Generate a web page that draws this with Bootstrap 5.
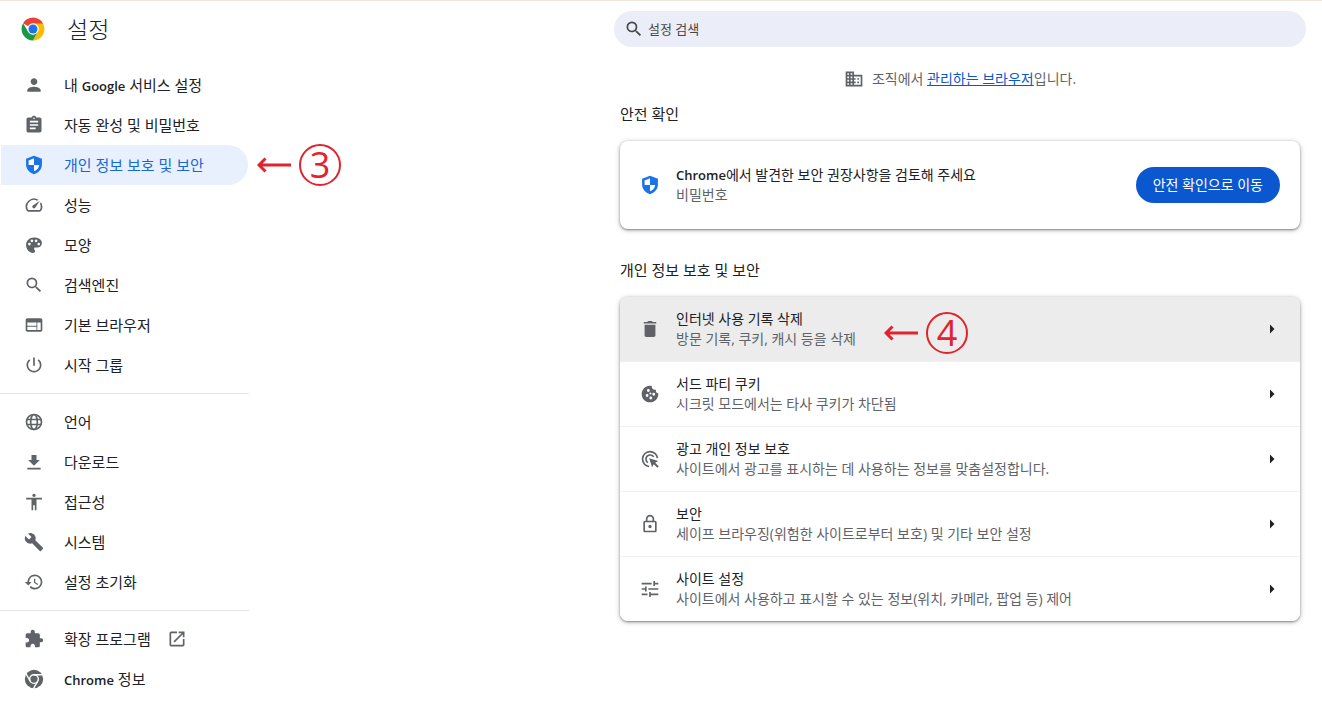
<!DOCTYPE html>
<html lang="ko">
<head>
<meta charset="utf-8">
<meta name="viewport" content="width=device-width, initial-scale=1">
<title>설정</title>
<link href="https://cdn.jsdelivr.net/npm/bootstrap@5.3.0/dist/css/bootstrap.min.css" rel="stylesheet">
<style>
  body { font-family: "Open Sans", "Noto Sans CJK KR", sans-serif; font-size: 14px; line-height: 20px; color: #202124; border-top: 1px solid #f0e4dc; background: #fff; }
  svg { display: block; fill: currentColor; flex: none; }
  .ic { width: 20px; height: 20px; color: #5f6368; }
  .ic-blue { color: #1a73e8; }
  .ic-dark { color: #474747; }
  .topbar { height: 56px; }
  .brand { font-size: 23px; gap: 22px; padding-left: 21px; font-weight: 300; line-height: 32px; }
  .column { width: 100%; max-width: 692px; }
  .content { padding: 0 6px; }
  .search { height: 36px; background: #ebedf8; color: #474747; gap: 4px; padding-left: 10px; }
  .search input { font-size: 13px; color: #474747; outline: 0; }
  .search input::placeholder { color: #474747; opacity: 1; }
  .sidebar { width: 249px; padding-top: 8px; }
  .side-item { height: 40px; width: 247px; margin-left: 1px; padding: 0 0 0 23px; gap: 20px; font-size: 15px; font-weight: 400; color: #202124; border-radius: 0 20px 20px 0; white-space: nowrap; }
  .side-item:hover { color: #202124; background: #f5f6f8; }
  .side-item.active { color: #1967d2; background: #e8f0fe; }
  .rule { height: 1px; margin: 8px 0; background: #e3e4e6; }
  .managed { color: #5f6368; gap: 8px; padding: 12px 0 13px; }
  .managed a { color: #0b57d0; }
  .section-title { font-size: 15px; line-height: 24px; font-weight: 400; margin: 0 0 15px; }
  .panel + .section-title { margin-top: 29px; }
  .panel { border: 0; border-radius: 8px; box-shadow: 0 1px 2px rgba(60,64,67,.5), 0 1px 4px 1px rgba(60,64,67,.25); }
  .panel-row { gap: 16px; padding: 12px 20px; border: 0; color: #202124; }
  .panel .panel-row + .panel-row { border-top: 1px solid #f0f0f0; }
  .panel-row.hovered { background: #ececec; }
  .safety { padding: 24px 20px; }
  .latin { font-size: 13px; font-weight: 600; }
  .sub { color: #5f6368; }
  .btn-check-safety { height: 36px; padding: 0 16px; border-radius: 18px; background: #0b57d0; color: #fff; font-size: 14px; line-height: 20px; }
  .btn-check-safety:hover { background: #0a4dbb; color: #fff; }
  .chev { width: 16px; height: 16px; color: #202124; }
  .callout-mark { position: absolute; gap: 8px; color: #e0232d; top: 50%; transform: translateY(-50%); pointer-events: none; }
  .callout-nav { left: 257px; }
  .callout-row { left: 264px; margin-top: 4px; }
  .ring { width: 42px; height: 42px; border: 2px solid; border-radius: 50%; font-size: 36px; line-height: 36px; font-weight: 500; }
</style>
</head>
<body>
<svg width="0" height="0" class="position-absolute" aria-hidden="true">
  <symbol id="i-person" viewBox="0 0 24 24"><path d="M12 12c2.21 0 4-1.79 4-4s-1.79-4-4-4-4 1.79-4 4 1.79 4 4 4zm0 2c-2.67 0-8 1.34-8 4v2h16v-2c0-2.66-5.33-4-8-4z"/></symbol>
  <symbol id="i-clip" viewBox="0 0 24 24"><path d="M19 3h-4.18C14.4 1.84 13.3 1 12 1c-1.3 0-2.4.84-2.82 2H5c-1.1 0-2 .9-2 2v14c0 1.1.9 2 2 2h14c1.1 0 2-.9 2-2V5c0-1.1-.9-2-2-2zm-7 0c.55 0 1 .45 1 1s-.45 1-1 1-1-.45-1-1 .45-1 1-1zm2 14H7v-2h7v2zm3-4H7v-2h10v2zm0-4H7V7h10v2z"/></symbol>
  <symbol id="i-shield" viewBox="0 0 24 24"><path d="M12 1 2.500 4.600v6.800c0 5.300 4 10.200 9.500 11.600 5.500-1.400 9.500-6.300 9.500-11.600V4.600z"/><path fill="#fff" d="M12 4v8H5.500V6.500zM12 12h6.300c-.5 3.600-2.900 6.400-6.300 7.500z"/></symbol>
  <symbol id="i-speed" viewBox="0 0 24 24"><path d="m20.380 8.570-1.230 1.850a8 8 0 0 1-.22 7.580H5.070A8 8 0 0 1 15.580 6.850l1.850-1.230A10 10 0 0 0 3.350 19a2 2 0 0 0 1.720 1h13.850a2 2 0 0 0 1.740-1 10 10 0 0 0-.27-10.440zm-9.790 6.840a2 2 0 0 0 2.830 0l5.660-8.490-8.490 5.660a2 2 0 0 0 0 2.830z"/></symbol>
  <symbol id="i-palette" viewBox="0 0 24 24"><path d="M12 3C6.500 3 2.500 7 2.500 12s3.500 9.500 8.500 9.500c1.400 0 2.300-.9 2.300-2.200 0-.7-.3-1.200-.7-1.700-.4-.4-.5-.8-.5-1.200 0-.9.7-1.500 1.600-1.500H16c3.200 0 5.500-2.400 5.500-5.400C21.500 5.600 17.300 3 12 3zM6.500 12.500a1.600 1.600 0 1 1 0-3.200 1.600 1.600 0 0 1 0 3.200zM9.500 8.600a1.600 1.600 0 1 1 0-3.200 1.600 1.600 0 0 1 0 3.200zm5 0a1.600 1.600 0 1 1 0-3.200 1.600 1.600 0 0 1 0 3.200zm3.200 3.900a1.600 1.600 0 1 1 0-3.200 1.600 1.600 0 0 1 0 3.200z"/></symbol>
  <symbol id="i-search" viewBox="0 0 24 24"><path d="M15.500 14h-.79l-.28-.27A6.470 6.470 0 0 0 16 9.500 6.500 6.500 0 1 0 9.500 16c1.610 0 3.090-.59 4.230-1.570l.27.28v.79l5 4.990L20.490 19l-4.990-5zm-6 0C7.010 14 5 11.990 5 9.500S7.010 5 9.500 5 14 7.010 14 9.500 11.990 14 9.500 14z"/></symbol>
  <symbol id="i-web" viewBox="0 0 24 24"><path d="M20 4H4c-1.100 0-1.990.9-1.990 2L2 18c0 1.100.9 2 2 2h16c1.100 0 2-.9 2-2V6c0-1.100-.9-2-2-2zm-5 14H4v-4h11v4zm0-5H4V9h11v4zm5 5h-4V9h4v9z"/></symbol>
  <symbol id="i-power" viewBox="0 0 24 24"><path d="M13 3h-2v10h2V3zm4.830 2.170-1.420 1.420A6.920 6.920 0 0 1 19 12a7 7 0 1 1-11.420-5.420L6.170 5.170A9 9 0 1 0 21 12a8.930 8.930 0 0 0-3.170-6.830z"/></symbol>
  <symbol id="i-globe" viewBox="0 0 24 24"><g fill="none" stroke="currentColor" stroke-width="2"><circle cx="12" cy="12" r="9"/><ellipse cx="12" cy="12" rx="4" ry="9"/><path d="M3.500 9h17M3.500 15h17"/></g></symbol>
  <symbol id="i-down" viewBox="0 0 24 24"><path d="M19 9.500h-4V3.500H9v6H5l7 7zM4 19v2h16v-2z"/></symbol>
  <symbol id="i-access" viewBox="0 0 24 24"><path d="M12 2c1.100 0 2 .9 2 2s-.9 2-2 2-2-.9-2-2 .9-2 2-2zm9.500 7H15v13h-2v-6h-2v6H9V9H2.500V7h19v2z"/></symbol>
  <symbol id="i-wrench" viewBox="0 0 24 24"><path d="m22.700 19-9.100-9.100c.9-2.300.4-5-1.500-6.900-2-2-5-2.400-7.400-1.300L9 6 6 9 1.600 4.700C.4 7.100.9 10.100 2.900 12.100c1.900 1.900 4.600 2.400 6.900 1.500l9.100 9.100c.4.4 1 .4 1.400 0l2.300-2.300c.5-.4.5-1.100.1-1.400z"/></symbol>
  <symbol id="i-history" viewBox="0 0 24 24"><path d="M13 3a9 9 0 0 0-9 9H1l3.890 3.890.7.140L9 12H6a7 7 0 1 1 2.060 4.940l-1.420 1.420A9 9 0 1 0 13 3zm-1 5v5l4.280 2.540.72-1.210-3.500-2.080V8H12z"/></symbol>
  <symbol id="i-ext" viewBox="0 0 24 24"><path d="M20.500 11H19V7c0-1.100-.9-2-2-2h-4V3.500a2.500 2.500 0 0 0-5 0V5H4c-1.100 0-1.990.9-1.990 2v3.800H3.500c1.490 0 2.700 1.210 2.700 2.700s-1.210 2.700-2.700 2.700H2V20c0 1.100.9 2 2 2h3.800v-1.500c0-1.490 1.210-2.700 2.700-2.700s2.700 1.210 2.700 2.700V22H17c1.100 0 2-.9 2-2v-4h1.500a2.500 2.500 0 0 0 0-5z"/></symbol>
  <symbol id="i-open" viewBox="0 0 24 24"><path d="M19 19H5V5h7V3H5a2 2 0 0 0-2 2v14a2 2 0 0 0 2 2h14c1.100 0 2-.9 2-2v-7h-2v7zM14 3v2h3.590l-9.830 9.830 1.410 1.410L19 6.410V10h2V3h-7z"/></symbol>
  <symbol id="i-chrome" viewBox="0 0 24 24"><circle cx="12" cy="12" r="11"/><g fill="none" stroke="#fff" stroke-width="1.700"><circle cx="12" cy="12" r="5.200"/><path d="M12 6.800h11M7.500 14.600 2 5.100M16.500 14.600 11 24"/></g></symbol>
  <symbol id="i-building" viewBox="0 0 24 24"><path d="M12 7V3H2v18h20V7H12zM6 19H4v-2h2v2zm0-4H4v-2h2v2zm0-4H4V9h2v2zm0-4H4V5h2v2zm4 12H8v-2h2v2zm0-4H8v-2h2v2zm0-4H8V9h2v2zm0-4H8V5h2v2zm10 12h-8v-2h2v-2h-2v-2h2v-2h-2V9h8v10zm-2-8h-2v2h2v-2zm0 4h-2v2h2v-2z"/></symbol>
  <symbol id="i-trash" viewBox="0 0 24 24"><path d="M5.500 7v12.500c0 1.100.9 2 2 2h9c1.100 0 2-.9 2-2V7zM19.500 3.500h-4L14 2.500h-4l-1.500 1h-4v2h15z"/></symbol>
  <symbol id="i-cookie" viewBox="0 0 24 24"><path d="M21.950 10.990c-1.790-.03-3.700-1.950-2.680-4.220-2.970 1-5.780-1.590-5.190-4.560C7.110.74 2 6.410 2 12c0 5.520 4.480 10 10 10 5.890 0 10.540-5.080 9.950-11.010zM8.500 15.500a1.700 1.700 0 1 1 0-3.400 1.700 1.700 0 0 1 0 3.400zm1.500-6a1.700 1.700 0 1 1 0-3.400 1.700 1.700 0 0 1 0 3.400zm3 9a1.700 1.700 0 1 1 0-3.400 1.700 1.700 0 0 1 0 3.400zm3.500-4.500a1.700 1.700 0 1 1 0-3.400 1.700 1.700 0 0 1 0 3.400zM12.500 12.500a1.200 1.200 0 1 1 0-2.400 1.200 1.200 0 0 1 0 2.400z"/></symbol>
  <symbol id="i-ads" viewBox="0 0 24 24"><g fill="none" stroke="currentColor" stroke-width="2"><path d="M11 21A9 9 0 1 1 21 11"/><path d="M9.500 16.400A5 5 0 1 1 16.400 9.500"/></g><path d="m11 11 11 3.500-3.800 2 4.300 4.300-1.700 1.700-4.300-4.300-2 3.800z"/></symbol>
  <symbol id="i-lock" viewBox="0 0 24 24"><path d="M18 8h-1V6A5 5 0 0 0 7 6v2H6c-1.100 0-2 .9-2 2v10c0 1.100.9 2 2 2h12c1.100 0 2-.9 2-2V10c0-1.100-.9-2-2-2zM9 6a3 3 0 0 1 6 0v2H9V6zm9 14H6V10h12v10zm-6-3a2 2 0 1 0 0-4 2 2 0 0 0 0 4z"/></symbol>
  <symbol id="i-tune" viewBox="0 0 24 24"><path d="M2 4.500h12v2H2zM18 4.500h4v2h-4zM16 2.500h2v6h-2zM2 11h4v2H2zM10 11h12v2H10zM6 9h2v6H6zM2 17.500h7v2H2zM13 17.500h9v2h-9zM11 15.500h2v6h-2z"/></symbol>
  <symbol id="i-chev" viewBox="0 0 16 16"><path d="M6 3.500 10.500 8 6 12.500z"/></symbol>
  <symbol id="i-arrow" viewBox="0 0 34 16"><path d="M8.500 1.500 2 8l6.500 6.500M2 8h32" fill="none" stroke="currentColor" stroke-width="3"/></symbol>
</svg>

<header class="topbar d-flex align-items-center">
  <div class="brand d-flex align-items-center">
    <svg width="24" height="24" viewBox="0 0 48 48" role="img" aria-label="Chrome">
      <path fill="#ea4335" d="M24 24 4.100 12.500A23 23 0 0 1 43.900 12.500L44 14H24z"/>
      <path fill="#fbbc04" d="M24 13h20.200A23 23 0 0 1 24 47l9.500-17.500z"/>
      <path fill="#1e9648" d="M4.100 12.500 14.500 29.500 24 35l9.500-5.500L24 47A23 23 0 0 1 4.100 12.500z"/>
      <circle cx="24" cy="24" r="11.500" fill="#fff"/><circle cx="24" cy="24" r="9" fill="#1a73e8"/>
    </svg>
    <span>설정</span>
  </div>
  <div class="column ms-auto me-3">
    <label class="search d-flex align-items-center rounded-pill">
      <svg class="ic ic-dark"><use href="#i-search"/></svg>
      <input type="search" class="border-0 bg-transparent flex-grow-1 p-0" placeholder="설정 검색" aria-label="설정 검색">
    </label>
  </div>
</header>

<div class="d-flex align-items-start">
  <nav class="sidebar nav flex-column flex-nowrap flex-shrink-0">
    <a class="side-item nav-link d-flex align-items-center" href="#"><svg class="ic"><use href="#i-person"/></svg><span>내 <span class="latin">Google</span> 서비스 설정</span></a>
    <a class="side-item nav-link d-flex align-items-center" href="#"><svg class="ic"><use href="#i-clip"/></svg>자동 완성 및 비밀번호</a>
    <div class="position-relative">
      <a class="side-item nav-link d-flex align-items-center active" aria-current="page" href="#"><svg class="ic ic-blue"><use href="#i-shield"/></svg>개인 정보 보호 및 보안</a>
      <div class="callout-mark callout-nav d-flex align-items-center"><svg width="34" height="16"><use href="#i-arrow"/></svg><span class="ring d-flex align-items-center justify-content-center">3</span></div>
    </div>
    <a class="side-item nav-link d-flex align-items-center" href="#"><svg class="ic"><use href="#i-speed"/></svg>성능</a>
    <a class="side-item nav-link d-flex align-items-center" href="#"><svg class="ic"><use href="#i-palette"/></svg>모양</a>
    <a class="side-item nav-link d-flex align-items-center" href="#"><svg class="ic"><use href="#i-search"/></svg>검색엔진</a>
    <a class="side-item nav-link d-flex align-items-center" href="#"><svg class="ic"><use href="#i-web"/></svg>기본 브라우저</a>
    <a class="side-item nav-link d-flex align-items-center" href="#"><svg class="ic"><use href="#i-power"/></svg>시작 그룹</a>
    <div class="rule"></div>
    <a class="side-item nav-link d-flex align-items-center" href="#"><svg class="ic"><use href="#i-globe"/></svg>언어</a>
    <a class="side-item nav-link d-flex align-items-center" href="#"><svg class="ic"><use href="#i-down"/></svg>다운로드</a>
    <a class="side-item nav-link d-flex align-items-center" href="#"><svg class="ic"><use href="#i-access"/></svg>접근성</a>
    <a class="side-item nav-link d-flex align-items-center" href="#"><svg class="ic"><use href="#i-wrench"/></svg>시스템</a>
    <a class="side-item nav-link d-flex align-items-center" href="#"><svg class="ic"><use href="#i-history"/></svg>설정 초기화</a>
    <div class="rule"></div>
    <a class="side-item nav-link d-flex align-items-center" href="#"><svg class="ic"><use href="#i-ext"/></svg><span class="d-flex align-items-center gap-3">확장 프로그램<svg class="ic"><use href="#i-open"/></svg></span></a>
    <a class="side-item nav-link d-flex align-items-center" href="#"><svg class="ic"><use href="#i-chrome"/></svg><span><span class="latin">Chrome</span> 정보</span></a>
  </nav>

  <main class="column content ms-auto me-3">
    <div class="managed d-flex align-items-center justify-content-center">
      <svg class="ic"><use href="#i-building"/></svg>
      <span>조직에서 <a href="#">관리하는 브라우저</a>입니다.</span>
    </div>
    <h2 class="section-title">안전 확인</h2>
    <section class="panel card">
      <div class="panel-row safety d-flex align-items-center">
        <svg class="ic ic-blue"><use href="#i-shield"/></svg>
        <div class="flex-grow-1">
          <div><span class="latin">Chrome</span>에서 발견한 보안 권장사항을 검토해 주세요</div>
          <div class="sub">비밀번호</div>
        </div>
        <button type="button" class="btn btn-check-safety">안전 확인으로 이동</button>
      </div>
    </section>
    <h2 class="section-title">개인 정보 보호 및 보안</h2>
    <div class="panel list-group">
      <button type="button" class="panel-row hovered list-group-item list-group-item-action d-flex align-items-center">
        <svg class="ic"><use href="#i-trash"/></svg>
        <span class="flex-grow-1"><span class="d-block">인터넷 사용 기록 삭제</span><span class="d-block sub">방문 기록, 쿠키, 캐시 등을 삭제</span></span>
        <svg class="chev"><use href="#i-chev"/></svg>
        <span class="callout-mark callout-row d-flex align-items-center"><svg width="34" height="16"><use href="#i-arrow"/></svg><span class="ring d-flex align-items-center justify-content-center">4</span></span>
      </button>
      <button type="button" class="panel-row list-group-item list-group-item-action d-flex align-items-center">
        <svg class="ic"><use href="#i-cookie"/></svg>
        <span class="flex-grow-1"><span class="d-block">서드 파티 쿠키</span><span class="d-block sub">시크릿 모드에서는 타사 쿠키가 차단됨</span></span>
        <svg class="chev"><use href="#i-chev"/></svg>
      </button>
      <button type="button" class="panel-row list-group-item list-group-item-action d-flex align-items-center">
        <svg class="ic"><use href="#i-ads"/></svg>
        <span class="flex-grow-1"><span class="d-block">광고 개인 정보 보호</span><span class="d-block sub">사이트에서 광고를 표시하는 데 사용하는 정보를 맞춤설정합니다.</span></span>
        <svg class="chev"><use href="#i-chev"/></svg>
      </button>
      <button type="button" class="panel-row list-group-item list-group-item-action d-flex align-items-center">
        <svg class="ic"><use href="#i-lock"/></svg>
        <span class="flex-grow-1"><span class="d-block">보안</span><span class="d-block sub">세이프 브라우징(위험한 사이트로부터 보호) 및 기타 보안 설정</span></span>
        <svg class="chev"><use href="#i-chev"/></svg>
      </button>
      <button type="button" class="panel-row list-group-item list-group-item-action d-flex align-items-center">
        <svg class="ic"><use href="#i-tune"/></svg>
        <span class="flex-grow-1"><span class="d-block">사이트 설정</span><span class="d-block sub">사이트에서 사용하고 표시할 수 있는 정보(위치, 카메라, 팝업 등) 제어</span></span>
        <svg class="chev"><use href="#i-chev"/></svg>
      </button>
    </div>
  </main>
</div>
<script src="https://cdn.jsdelivr.net/npm/bootstrap@5.3.0/dist/js/bootstrap.bundle.min.js"></script>
</body>
</html>
